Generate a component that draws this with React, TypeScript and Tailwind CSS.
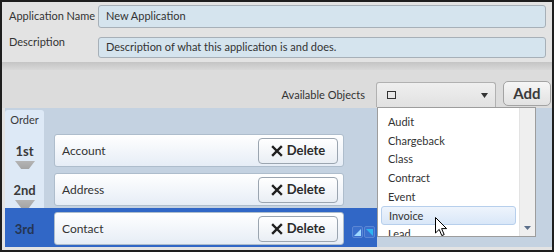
import React from 'react';

const items = ['Audit', 'Chargeback', 'Class', 'Contract', 'Event', 'Invoice', 'Lead'];

const rows = [
  { order: '1st', name: 'Account' },
  { order: '2nd', name: 'Address' },
  { order: '3rd', name: 'Contact', selected: true },
];

function DeleteButton() {
  return (
    <button className="w-[80px] h-[26px] rounded-[4px] border border-[#9ba5b0] bg-gradient-to-b from-white to-[#e9eef4] flex items-center justify-center gap-[4px] text-[#2b2b2b]">
      <svg width="12" height="12" viewBox="0 0 12 12">
        <path d="M2 2 L10 10 M10 2 L2 10" stroke="#1f1f1f" strokeWidth="2.4" strokeLinecap="square" />
      </svg>
      <span className="text-[13px] font-bold leading-none">Delete</span>
    </button>
  );
}

function DownTriangle() {
  return (
    <svg width="20" height="13" viewBox="0 0 20 13" className="mt-[2px] shrink-0">
      <defs>
        <linearGradient id="tri" x1="0" y1="0" x2="0" y2="1">
          <stop offset="0" stopColor="#b4b4b4" />
          <stop offset="1" stopColor="#9a9a9a" />
        </linearGradient>
      </defs>
      <path d="M0 0 L20 0 L10 13 Z" fill="url(#tri)" />
    </svg>
  );
}

function MoveIcons() {
  return (
    <div className="flex gap-[1px] ml-[8px] mt-[18px]">
      <div className="w-[11px] h-[12px] rounded-[2px] border border-[#5b86d4] bg-[#3a6fcd] flex items-center justify-center">
        <svg width="7" height="7" viewBox="0 0 7 7">
          <path d="M7 0 L7 7 L0 7 Z" fill="#9fd8ff" />
        </svg>
      </div>
      <div className="w-[11px] h-[12px] rounded-[2px] border border-[#5b86d4] bg-[#3a6fcd] flex items-center justify-center">
        <svg width="7" height="7" viewBox="0 0 7 7">
          <path d="M0 0 L7 0 L7 7 Z" fill="#2fb4f0" />
        </svg>
      </div>
    </div>
  );
}

function Cursor() {
  return (
    <svg width="13" height="20" viewBox="0 0 13 20" className="absolute left-[57px] top-[109px]">
      <path
        d="M0.5 0.5 L0.5 16 L4.2 12.4 L6.8 18.6 L9.2 17.6 L6.6 11.6 L11.6 11.6 Z"
        fill="white"
        stroke="black"
        strokeWidth="1"
        strokeLinejoin="round"
      />
    </svg>
  );
}

export default function App() {
  return (
    <div className="w-[554px] h-[252px] border-2 border-[#1e1e1e] bg-[#e3e3e3] flex flex-col overflow-hidden font-['Lato',sans-serif] text-[#333] text-[11px]">
      {/* Application form */}
      <div className="flex flex-col pt-[3px] pr-[6px]">
        <div className="flex items-center h-[23px]">
          <span className="w-[96px] shrink-0 pl-[7px] whitespace-nowrap">Application Name</span>
          <div className="flex-1 h-full rounded-[3px] border border-[#a7b0b8] bg-[#d5e4ee] flex items-center pl-[7px]">
            New Application
          </div>
        </div>
        <div className="flex items-start h-[21px] mt-[9px]">
          <span className="w-[96px] shrink-0 pl-[7px] -mt-[3px] whitespace-nowrap">Description</span>
          <div className="flex-1 h-full rounded-[3px] border border-[#a7b0b8] bg-[#d5e4ee] flex items-center pl-[7px]">
            Description of what this application is and does.
          </div>
        </div>
      </div>

      {/* Separator */}
      <div className="mt-[4px] h-[8px] bg-gradient-to-b from-[#c4c4c4] to-[#d8d8d8]" />

      {/* Toolbar */}
      <div className="h-[38px] bg-[#dcdcdc] flex items-start justify-end pt-[11px] pr-[1px]">
        <span className="mt-[6px] mr-[11px]">Available Objects</span>
        <div className="w-[120px] h-[25px] mt-[1px] rounded-t-[3px] border border-[#b1b1b1] border-b-0 bg-gradient-to-b from-[#efefef] to-[#e1e1e1] flex items-center justify-between pl-[10px] pr-[7px]">
          <div className="w-[9px] h-[8px] border border-[#333]" />
          <svg width="7" height="5" viewBox="0 0 7 5">
            <path d="M0 0 L7 0 L3.5 5 Z" fill="#333" />
          </svg>
        </div>
        <button className="ml-[7px] w-[48px] h-[25px] rounded-[5px] border border-[#a3a3a3] bg-gradient-to-b from-[#f6f6f6] to-[#e2e2e2] text-[15px] font-bold text-[#3a3a3a] leading-none">
          Add
        </button>
      </div>

      {/* Object list */}
      <div className="flex-1 ml-[3px] mb-[3px] bg-[#c4d2e1] relative flex flex-col">
        <div className="h-[22px] flex items-end">
          <div className="w-[39px] h-[20px] rounded-t-[3px] bg-[#dde9f6] text-[11px] text-center pt-[4px] leading-none text-[#3a3a3a]">
            Order
          </div>
        </div>
        {rows.map((row) => (
          <div
            key={row.name}
            className={`h-[39px] flex items-start ${row.selected ? 'relative w-[372px] bg-[#3167c6]' : ''}`}
          >
            <div
              className={`w-[39px] h-full flex flex-col items-center pt-[13px] ${row.selected ? '' : 'bg-[#dde9f6]'}`}
            >
              <span className={`text-[13px] font-bold leading-[16px] ${row.selected ? 'text-[#253552]' : 'text-[#3a3a3a]'}`}>
                {row.order}
              </span>
              {!row.selected && <DownTriangle />}
            </div>
            <div className="ml-[10px] mt-[4px] w-[290px] h-[33px] rounded-[3px] border border-[#aebdcc] bg-gradient-to-b from-white to-[#e6edf6] flex items-center justify-between pl-[7px] pr-[5px]">
              <span className="text-[12px]">{row.name}</span>
              <DeleteButton />
            </div>
            {row.selected && <MoveIcons />}
          </div>
        ))}

        {/* Dropdown popup */}
        <div className="absolute left-[372px] top-[-1px] w-[159px] h-[130px] border border-[#9d9d9d] bg-white flex overflow-hidden z-20">
          <div className="flex-1 flex flex-col pt-[5px] px-[3px]">
            {items.map((item) => (
              <div
                key={item}
                className={`h-[18.7px] shrink-0 flex items-center pl-[7px] rounded-[3px] ${
                  item === 'Invoice' ? 'border border-[#b7cfec] bg-gradient-to-b from-[#eef4fc] to-[#d9e7f8] pl-[6px]' : ''
                }`}
              >
                {item}
              </div>
            ))}
          </div>
          <div className="w-[16px] border-l border-[#e3e3e3] bg-[#efefef] flex flex-col justify-end items-center pb-[6px]">
            <svg width="7" height="4" viewBox="0 0 7 4">
              <path d="M0 0 L7 0 L3.5 4 Z" fill="#5b6f8a" />
            </svg>
          </div>
          <Cursor />
        </div>
      </div>
    </div>
  );
}
